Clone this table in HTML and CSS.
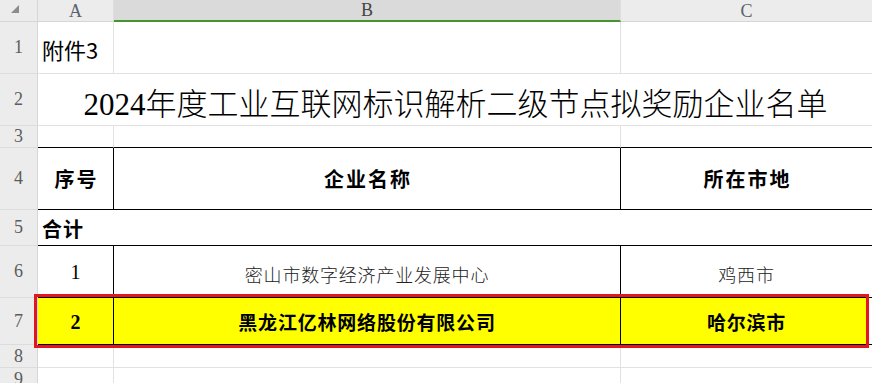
FILE: index.html
```html
<!DOCTYPE html>
<html lang="zh">
<head>
<meta charset="utf-8">
<title>2024年度工业互联网标识解析二级节点拟奖励企业名单</title>
<link rel="stylesheet" href="styles.css">
</head>
<body>
<div class="sheet">
  <div class="grid">
    <!-- column headers -->
    <div class="corner"><svg class="tri" width="10" height="10" viewBox="0 0 10 10"><polygon points="1,8 9,8 9,0" fill="#8c8c8c"/></svg></div>
    <div class="colhead">A</div>
    <div class="colhead sel">B</div>
    <div class="colhead">C</div>

    <!-- row 1 -->
    <div class="rowhead">1</div>
    <div class="cell left note">附件3</div>
    <div class="cell"></div>
    <div class="cell"></div>

    <!-- row 2 -->
    <div class="rowhead">2</div>
    <div class="cell span3 title">2024年度工业互联网标识解析二级节点拟奖励企业名单</div>

    <!-- row 3 -->
    <div class="rowhead">3</div>
    <div class="cell tb"></div>
    <div class="cell tb"></div>
    <div class="cell tb"></div>

    <!-- row 4 -->
    <div class="rowhead">4</div>
    <div class="cell tb tr th">序号</div>
    <div class="cell tb tr th">企业名称</div>
    <div class="cell tb th">所在市地</div>

    <!-- row 5 -->
    <div class="rowhead">5</div>
    <div class="cell span3 tb left total">合计</div>

    <!-- row 6 -->
    <div class="rowhead">6</div>
    <div class="cell tb tr num">1</div>
    <div class="cell tb tr body">密山市数字经济产业发展中心</div>
    <div class="cell tb body">鸡西市</div>

    <!-- row 7 -->
    <div class="rowhead">7</div>
    <div class="cell tb tr hl num bold">2</div>
    <div class="cell tb tr hl strong">黑龙江亿林网络股份有限公司</div>
    <div class="cell tb hl hl-end strong">哈尔滨市</div>

    <!-- row 8 -->
    <div class="rowhead">8</div>
    <div class="cell"></div>
    <div class="cell"></div>
    <div class="cell"></div>

    <!-- row 9 -->
    <div class="rowhead">9</div>
    <div class="cell"></div>
    <div class="cell"></div>
    <div class="cell"></div>
  </div>
  <div class="mark"></div>
</div>
</body>
</html>
```

FILE: styles.css
```css
* { box-sizing: border-box; }

html, body {
  margin: 0;
  padding: 0;
  background: #fff;
  width: 872px;
  height: 383px;
  overflow: hidden;
}

.sheet {
  position: relative;
  width: 872px;
  height: 383px;
  overflow: hidden;
  font-family: "Noto Sans CJK SC", sans-serif;
  color: #000;
}

.grid {
  display: grid;
  grid-template-columns: 38px 76px 507px 252px;
  grid-template-rows: 22px 52px 52px 22px 62px 36px 52px 47px 23px 23px;
}

.corner {
  background: #ececec;
  border-right: 1px solid #d6d6d6;
  border-bottom: 1px solid #d6d6d6;
  display: flex;
  align-items: flex-start;
  justify-content: flex-end;
  padding: 5px 17px 0 0;
}

.tri { display: block; }

.colhead {
  background: #ececec;
  border-right: 1px solid #dedede;
  border-bottom: 1px solid #d6d6d6;
  display: flex;
  align-items: center;
  justify-content: center;
  font-family: "Liberation Serif", serif;
  font-size: 18px;
  color: #5a6270;
  padding-top: 1px;
}

.colhead.sel {
  background: #dadada;
  border-bottom: 2px solid #44952b;
  color: #444;
}

.rowhead {
  background: #ececec;
  border-right: 1px solid #d6d6d6;
  border-bottom: 1px solid #dcdcdc;
  display: flex;
  align-items: center;
  justify-content: center;
  font-family: "Liberation Serif", serif;
  font-size: 18px;
  color: #5c5c5c;
}

.cell {
  border-right: 1px solid #e1e1e1;
  border-bottom: 1px solid #e1e1e1;
  display: flex;
  align-items: center;
  justify-content: center;
  white-space: nowrap;
  overflow: visible;
}

.cell.left {
  justify-content: flex-start;
  padding-left: 4px;
}

.span3 {
  grid-column: span 3;
  border-right: none;
}

.tb { border-bottom-color: #000; }
.tr { border-right-color: #000; }

.note {
  font-size: 22px;
  padding-top: 3px;
}

.title {
  font-family: "Liberation Serif", "Noto Sans CJK SC", serif;
  font-size: 31px;
  font-weight: 300;
  padding-top: 3px;
}

.th {
  font-size: 20px;
  font-weight: 700;
  letter-spacing: 2px;
  padding-left: 2px;
}

.total {
  font-size: 20px;
  font-weight: 700;
  letter-spacing: 1px;
  padding-top: 2px;
}

.num {
  font-family: "Liberation Serif", serif;
  font-size: 20px;
  padding-top: 2px;
}

.num.bold { font-weight: 700; }

.body {
  font-size: 18px;
  font-weight: 300;
  letter-spacing: 0.8px;
  color: #222;
  padding-top: 4px;
}

.strong {
  font-family: "Noto Sans CJK SC", sans-serif;
  font-size: 19px;
  font-weight: 700;
  letter-spacing: 0.8px;
}

.hl { background: #ffff00; }
.hl-end { background: linear-gradient(to right, #ffff00 248px, #fff 248px); }

.mark {
  position: absolute;
  left: 34px;
  top: 294px;
  width: 835px;
  height: 54px;
  border: 3px solid #e3151d;
  pointer-events: none;
}
```
